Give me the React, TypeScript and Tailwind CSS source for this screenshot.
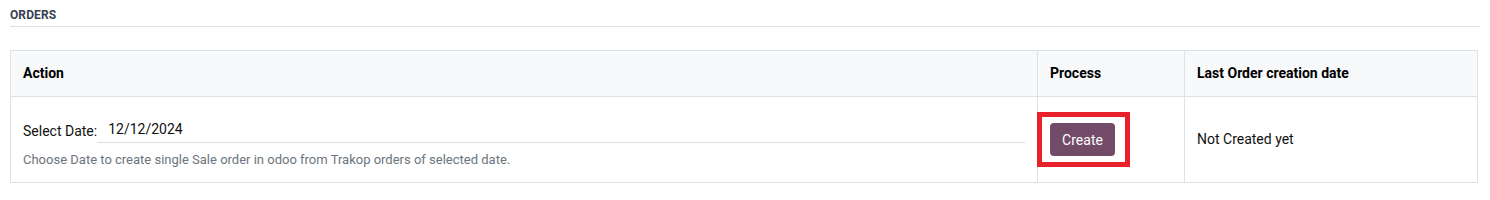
export default function App() {
  return (
    <div className="bg-white min-h-[200px] px-[10px] pt-[8px] font-['Roboto',sans-serif] text-[#212529]">
      <div className="border-b border-[#dee2e6] pb-[4px] mb-[23px]">
        <h3 className="text-[12px] font-bold uppercase text-[#374151] leading-[14px] tracking-[0.1px]">
          Orders
        </h3>
      </div>

      <table className="w-[1468px] border-collapse border border-[#dee2e6] text-[14px]">
        <thead>
          <tr className="bg-[#f8f9fa] h-[46px]">
            <th className="w-[1027px] border border-[#dee2e6] px-[12px] text-left font-bold text-[#000]">
              Action
            </th>
            <th className="w-[147px] border border-[#dee2e6] px-[12px] text-left font-bold text-[#000]">
              Process
            </th>
            <th className="border border-[#dee2e6] px-[12px] text-left font-bold text-[#000]">
              Last Order creation date
            </th>
          </tr>
        </thead>
        <tbody>
          <tr className="h-[86px]">
            <td className="border border-[#dee2e6] pl-[12px] pr-[12px] align-top pt-[23px]">
              <div className="flex items-center">
                <span className="text-[#111] whitespace-nowrap">Select Date:</span>
                <div className="flex-1 border-b border-[#e5d9e0] pb-[3px] pl-[11px] leading-[19px] text-[#111]">
                  12/12/2024
                </div>
              </div>
              <div className="mt-[9px] text-[13px] text-[#6c757d] leading-[16px]">
                Choose Date to create single Sale order in odoo from Trakop orders of selected date.
              </div>
            </td>
            <td className="border border-[#dee2e6] p-0 align-middle">
              <div className="-ml-px inline-block border-[5px] border-[#e8202a] pl-[8px] pr-[10px] py-[6px]">
                <button className="h-[33px] w-[65px] rounded-[4px] bg-[#714b67] text-[14px] text-white leading-none">
                  Create
                </button>
              </div>
            </td>
            <td className="border border-[#dee2e6] px-[12px] align-middle text-[#111]">
              Not Created yet
            </td>
          </tr>
        </tbody>
      </table>
    </div>
  );
}
